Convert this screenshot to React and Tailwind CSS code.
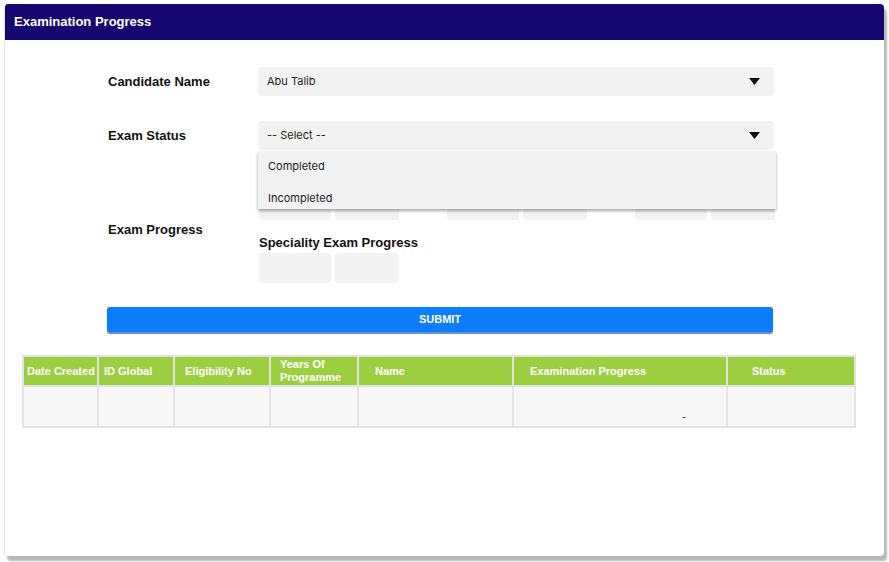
import { useState } from "react";

const columns = [
  { label: "Date Created", w: "w-[75px]", pad: "pl-[3px]" },
  { label: "ID Global", w: "w-[76px]", pad: "pl-[5px]" },
  { label: "Eligibility No", w: "w-[96px]", pad: "pl-[10px]" },
  { label: "Years Of Programme", w: "w-[88px]", pad: "pl-[9px] pr-[14px]" },
  { label: "Name", w: "w-[155px]", pad: "pl-[16px]" },
  { label: "Examination Progress", w: "w-[214px]", pad: "pl-[16px]" },
  { label: "Status", w: "w-[128px]", pad: "pl-[24px]" },
];

function Caret() {
  return (
    <svg width="11" height="7" viewBox="0 0 11 7" className="shrink-0">
      <path d="M0 0h11L5.5 7z" fill="#111" />
    </svg>
  );
}

function SelectBox({ value }) {
  return (
    <div className="h-[29px] w-[516px] rounded-[4px] bg-[#f2f2f2] flex items-center justify-between pl-[9px] pr-[14px]">
      <span className="text-[11px] text-[#222] font-['Inter',sans-serif]">{value}</span>
      <Caret />
    </div>
  );
}

function ProgressGroup({ title }) {
  return (
    <div className="flex flex-col">
      <div className="text-[13px] font-bold leading-[16px] text-[#111] mb-[2px] whitespace-nowrap">{title}</div>
      <div className="flex gap-[4px]">
        <div className="h-[30px] w-[72px] rounded-[4px] bg-[#f2f2f2]" />
        <div className="h-[30px] w-[64px] rounded-[4px] bg-[#f2f2f2]" />
      </div>
    </div>
  );
}

export default function App() {
  const [open] = useState(true);

  return (
    <div className="w-[889px] h-[562px] bg-white font-['Liberation_Sans',Arial,sans-serif] pt-[4px] pl-[4px]">
      <div className="w-[880px] h-[552px] bg-white rounded-[4px] shadow-[3px_5px_2px_rgba(0,0,0,0.28)] border-l border-[#e4e4e4] overflow-hidden">
        <div className="h-[36px] bg-[#15076f] flex items-center px-[9px]">
          <h1 className="text-white text-[13px] font-bold">Examination Progress</h1>
        </div>

        <div className="pl-[103px] pt-[27px] flex flex-col">
          <div className="flex items-center">
            <div className="w-[150px] text-[13px] font-bold text-[#111]">Candidate Name</div>
            <SelectBox value="Abu Talib" />
          </div>

          <div className="flex items-center mt-[25px]">
            <div className="w-[150px] text-[13px] font-bold text-[#111]">Exam Status</div>
            <div className="relative">
              <SelectBox value="-- Select --" />
              {open && (
                <div className="absolute left-0 top-[30px] z-10 w-[518px] h-[58px] bg-[#f2f2f2] shadow-[0_2px_3px_rgba(0,0,0,0.35)] text-[11px] text-[#222] font-['Inter',sans-serif]">
                  <div className="h-[30px] flex items-center pl-[10px]">Completed</div>
                  <div className="h-[28px] flex items-center pl-[10px] pt-[6px]">Incompleted</div>
                </div>
              )}
            </div>
          </div>

          <div className="flex items-center mt-[22px]">
            <div className="w-[151px] text-[13px] font-bold text-[#111] pt-[4px]">Exam Progress</div>
            <div className="w-[516px] flex flex-col gap-[15px]">
              <div className="flex justify-between">
                <ProgressGroup title="Basic Exam" />
                <ProgressGroup title="Intermediate" />
                <ProgressGroup title="Advanced" />
              </div>
              <ProgressGroup title="Speciality Exam Progress" />
            </div>
          </div>

          <button className="mt-[24px] ml-[-1px] w-[666px] h-[25px] rounded-[3px] bg-[#0b7dfd] shadow-[0_2px_1px_rgba(0,60,160,0.6)] text-white text-[11px] font-bold">
            SUBMIT
          </button>
        </div>

        <table className="ml-[17px] mt-[23px] w-[832px] border-collapse table-fixed">
          <thead>
            <tr className="bg-[#9bcf3f] h-[30px]">
              {columns.map((c) => (
                <th
                  key={c.label}
                  className={`${c.w} ${c.pad} border-2 border-[#e3e3e3] text-left text-white text-[11px] font-bold leading-[13px]`}
                >
                  {c.label}
                </th>
              ))}
            </tr>
          </thead>
          <tbody>
            <tr className="bg-[#f7f7f7] h-[41px]">
              {columns.map((c) => (
                <td key={c.label} className="border-2 border-[#e3e3e3] p-0 align-bottom">
                  {c.label === "Examination Progress" && (
                    <div className="flex justify-end pr-[40px] pb-[2px] text-[11px] text-[#222]">-</div>
                  )}
                </td>
              ))}
            </tr>
          </tbody>
        </table>
      </div>
    </div>
  );
}
